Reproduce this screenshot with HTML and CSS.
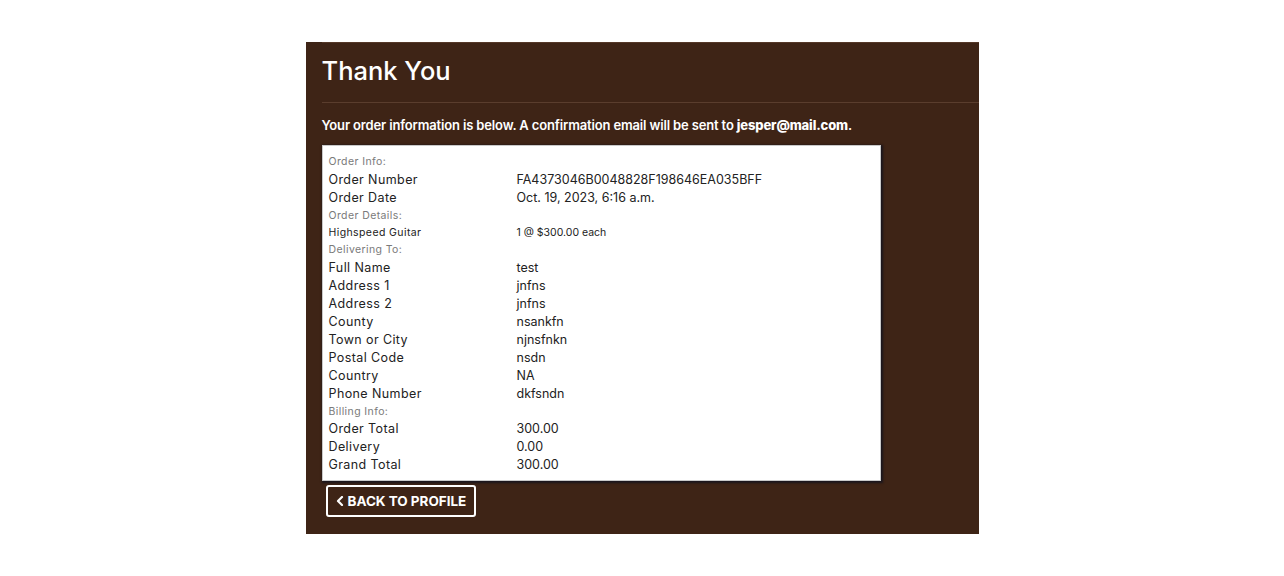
FILE: index.html
```html
<!DOCTYPE html>
<html lang="en">
<head>
<meta charset="utf-8">
<title>Thank You</title>
<link rel="stylesheet" href="styles.css">
</head>
<body>
<main class="page">
  <section class="panel">
    <div class="rule rule-top"></div>
    <h1 class="title">Thank You</h1>
    <div class="rule"></div>
    <p class="lead">Your order information is below. A confirmation email will be sent to <strong>jesper@mail.com</strong>.</p>
    <div class="order-box">
      <div class="row head"><span>Order Info:</span></div>
      <div class="row"><span class="lbl">Order Number</span><span>FA4373046B0048828F198646EA035BFF</span></div>
      <div class="row"><span class="lbl">Order Date</span><span>Oct. 19, 2023, 6:16 a.m.</span></div>
      <div class="row head"><span>Order Details:</span></div>
      <div class="row small"><span class="lbl">Highspeed Guitar</span><span>1 @ $300.00 each</span></div>
      <div class="row head"><span>Delivering To:</span></div>
      <div class="row"><span class="lbl">Full Name</span><span>test</span></div>
      <div class="row"><span class="lbl">Address 1</span><span>jnfns</span></div>
      <div class="row"><span class="lbl">Address 2</span><span>jnfns</span></div>
      <div class="row"><span class="lbl">County</span><span>nsankfn</span></div>
      <div class="row"><span class="lbl">Town or City</span><span>njnsfnkn</span></div>
      <div class="row"><span class="lbl">Postal Code</span><span>nsdn</span></div>
      <div class="row"><span class="lbl">Country</span><span>NA</span></div>
      <div class="row"><span class="lbl">Phone Number</span><span>dkfsndn</span></div>
      <div class="row head"><span>Billing Info:</span></div>
      <div class="row"><span class="lbl">Order Total</span><span>300.00</span></div>
      <div class="row"><span class="lbl">Delivery</span><span>0.00</span></div>
      <div class="row"><span class="lbl">Grand Total</span><span>300.00</span></div>
    </div>
    <a class="btn-back" href="#">
      <svg class="chev" width="8" height="10" viewBox="0 0 8 10" aria-hidden="true"><path d="M6 1 L2 5 L6 9" fill="none" stroke="#fff" stroke-width="2.2" stroke-linecap="round" stroke-linejoin="round"/></svg>
      <span>BACK TO PROFILE</span>
    </a>
  </section>
</main>
</body>
</html>
```

FILE: styles.css
```css
html, body {
  margin: 0;
  padding: 0;
  background: #ffffff;
}
body {
  font-family: "Inter", "Open Sans", sans-serif;
  color: #222;
}
.page {
  padding-top: 42px;
}
.panel {
  width: 657px;
  margin: 0 auto;
  background: #3e2416;
  padding: 0 0 17px 16px;
  box-sizing: content-box;
}
.rule {
  height: 1px;
  background: #5a3d2d;
}
.rule-top {
  background: #553828;
}
.title {
  margin: 0;
  padding: 13px 0 0;
  height: 46px;
  font-size: 25.5px;
  font-weight: 500;
  color: #ffffff;
  line-height: 30px;
  letter-spacing: 0;
}
.lead {
  margin: 0;
  padding: 14px 0 0;
  height: 28px;
  font-size: 13px;
  font-weight: 600;
  color: #ffffff;
  line-height: 16px;
  letter-spacing: -0.15px;
}
.lead strong {
  font-weight: 800;
}
.order-box {
  width: 544px;
  background: #ffffff;
  border: 1px solid #c9c9c9;
  box-shadow: 1px 1px 2px 1px rgba(20, 20, 30, 0.85);
  padding: 7px 7px 6px 6px;
}
.row {
  display: grid;
  grid-template-columns: 188px 1fr;
  height: 18px;
  line-height: 18px;
  font-size: 12.5px;
  color: #222;
}
.row .lbl {
  letter-spacing: 0.4px;
}
.row.head {
  height: 17.5px;
  line-height: 17.5px;
  font-size: 10.5px;
  color: #7a7a7a;
  letter-spacing: 0.4px;
}
.row.small {
  height: 17px;
  line-height: 17px;
  font-size: 10.5px;
  color: #222;
}
.btn-back {
  display: inline-flex;
  align-items: center;
  gap: 4px;
  margin: 4px 0 0 4px;
  height: 28px;
  padding: 0 8px 0 8px;
  border: 2px solid #ffffff;
  border-radius: 3px;
  color: #ffffff;
  text-decoration: none;
  font-size: 13.5px;
  font-weight: 700;
  letter-spacing: -0.02px;
}
.chev {
  display: block;
}
```
